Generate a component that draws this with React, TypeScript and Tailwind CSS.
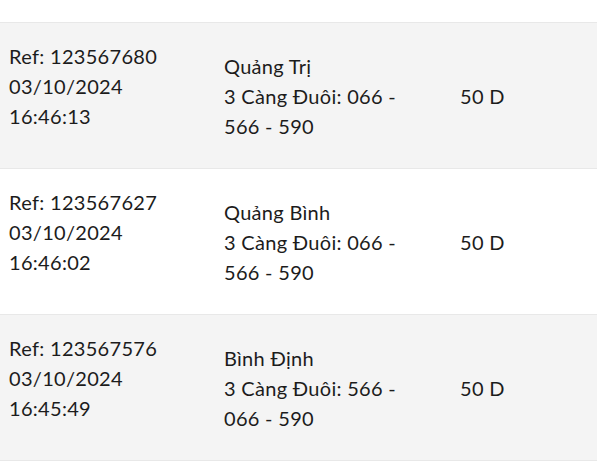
const rows = [
  {
    ref: "123567680",
    date: "03/10/2024",
    time: "16:46:13",
    province: "Quảng Trị",
    bet: "3 Càng Đuôi: 066 - 566 - 590",
    amount: "50 D",
  },
  {
    ref: "123567627",
    date: "03/10/2024",
    time: "16:46:02",
    province: "Quảng Bình",
    bet: "3 Càng Đuôi: 066 - 566 - 590",
    amount: "50 D",
  },
  {
    ref: "123567576",
    date: "03/10/2024",
    time: "16:45:49",
    province: "Bình Định",
    bet: "3 Càng Đuôi: 566 - 066 - 590",
    amount: "50 D",
  },
];

export default function App() {
  return (
    <div className="min-h-[466px] bg-white pt-[22px] font-['Lato',sans-serif] text-[20px] leading-[30px] tracking-[0.3px] text-[#1c1c1c]">
      <div className="border-b border-[#e8e8e8]">
        {rows.map((r, i) => (
          <div
            key={r.ref}
            className={
              "flex h-[146px] items-center border-t border-[#e8e8e8] " +
              (i % 2 === 0 ? "bg-[#f4f4f4]" : "bg-white")
            }
          >
            <div className="w-[224px] shrink-0 pb-5 pl-[9px]">
              <div>Ref: {r.ref}</div>
              <div>{r.date}</div>
              <div>{r.time}</div>
            </div>
            <div className="w-[236px] shrink-0 pr-[30px]">
              <div>{r.province}</div>
              <div>{r.bet}</div>
            </div>
            <div>{r.amount}</div>
          </div>
        ))}
      </div>
    </div>
  );
}
